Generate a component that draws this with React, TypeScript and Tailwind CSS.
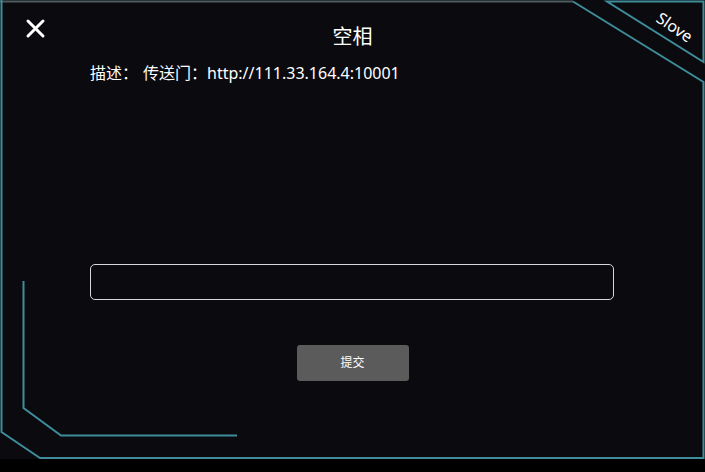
import { useState } from 'react'

const teal = '#3f8d9a'

function FrameLines() {
  return (
    <svg
      className="pointer-events-none absolute inset-0"
      width={705}
      height={459}
      viewBox="0 0 705 459"
      fill="none"
    >
      <line x1={0} y1={1.5} x2={573} y2={1.5} stroke="#4c5d61" strokeWidth={2} />
      <polyline points="1.5,0 1.5,432 40,458 703.5,458 703.5,82 573,1.5" stroke={teal} strokeWidth={2} />
      <polygon points="607,1.5 703.5,1.5 703.5,62" stroke={teal} strokeWidth={2} />
      <polyline points="23.5,281 23.5,408 61,435.5 237,435.5" stroke={teal} strokeWidth={2} />
    </svg>
  )
}

export default function App() {
  const [answer, setAnswer] = useState('')

  return (
    <div
      className="h-[472px] w-[705px] bg-black text-white"
      style={{ fontFamily: '"Noto Sans", "Noto Sans CJK SC", sans-serif' }}
    >
      <div className="relative h-[459px] overflow-hidden bg-[#0a0a0f]">
        <FrameLines />

        <button className="absolute left-[25px] top-[18px] text-white" aria-label="close">
          <svg width={21} height={21} viewBox="0 0 21 21">
            <path d="M3 3 L18 18 M18 3 L3 18" stroke="white" strokeWidth={3} strokeLinecap="round" />
          </svg>
        </button>

        <span className="absolute right-[11px] top-[19px] rotate-[34deg] text-[16px] leading-none text-white">
          Slove
        </span>

        <div className="flex flex-col px-[90px] pt-[24px]">
          <h1 className="text-center text-[20px] leading-[26px]">空相</h1>
          <p className="mt-[13px] text-[16px] leading-[20px]">
            描述：<span className="ml-[5px]">传送门：http://111.33.164.4:10001</span>
          </p>

          <input
            value={answer}
            onChange={(e) => setAnswer(e.target.value)}
            className="mt-[181px] h-[36px] w-[524px] rounded-[5px] border border-[#d8d8d8] bg-transparent px-3 text-sm text-white outline-none"
          />

          <div className="mt-[45px] flex justify-center">
            <button className="h-[36px] w-[112px] rounded-[3px] bg-[#5b5b5b] text-[12px] text-white">
              提交
            </button>
          </div>
        </div>
      </div>
    </div>
  )
}
